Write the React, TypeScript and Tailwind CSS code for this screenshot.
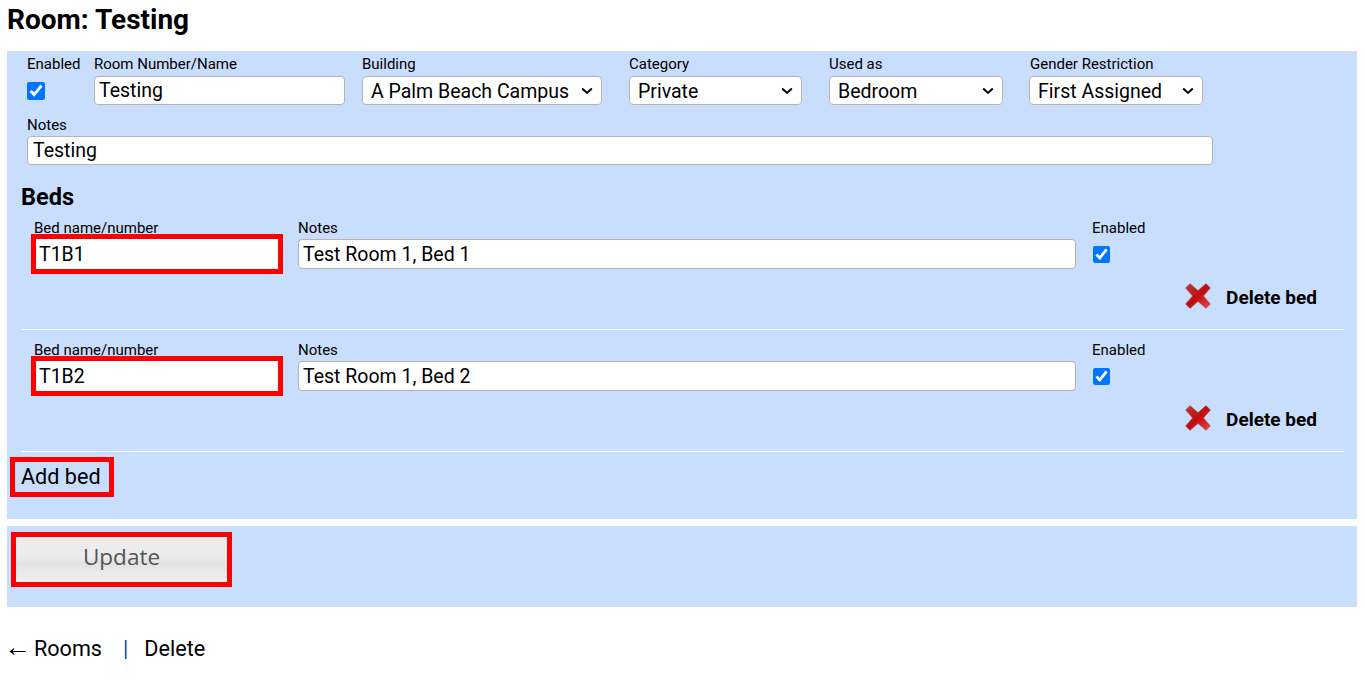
import React from "react";

const inputCls =
  "block rounded-[4px] border border-[#b5b5b5] bg-white px-[4px] text-[19.5px] text-black outline-none";

function Field({ label, className, children }: { label: string; className: string; children: React.ReactNode }) {
  return (
    <div className={className}>
      <div className="h-[18px] text-[15px] leading-[17px] whitespace-nowrap text-black">{label}</div>
      {children}
    </div>
  );
}

function Dropdown({ value, width }: { value: string; width: string }) {
  return (
    <div className={`relative mt-[2px] ${width}`}>
      <select
        className="block h-[29px] w-full appearance-none rounded-[4px] border border-[#b5b5b5] bg-white pb-[1px] pl-[8px] text-[19.5px] text-black outline-none"
        defaultValue={value}
      >
        <option value={value}>{value}</option>
      </select>
      {/* native arrow is too small here, so it is drawn */}
      <svg width="12" height="8" viewBox="0 0 12 8" className="pointer-events-none absolute top-[11px] right-[9px]">
        <path d="M1.2 1.5 L6 6 L10.8 1.5" fill="none" stroke="#000" strokeWidth="2" />
      </svg>
    </div>
  );
}

function DeleteIcon() {
  return (
    <svg width="28" height="28" viewBox="0 0 28 28" className="block blur-[0.4px]">
      <defs>
        <linearGradient id="delRed" x1="0" y1="0" x2="1" y2="1">
          <stop offset="0" stopColor="#b5403f" />
          <stop offset="0.5" stopColor="#c20c0c" />
          <stop offset="1" stopColor="#ee4a4a" />
        </linearGradient>
      </defs>
      <path
        d="M6 1.5 L14 8.5 L22 1.5 L26.5 6 L19.5 14 L26.5 22 L22 26.5 L14 19.5 L6 26.5 L1.5 22 L8.5 14 L1.5 6 Z"
        fill="url(#delRed)"
        stroke="#8a5060"
        strokeOpacity="0.35"
        strokeWidth="1"
        strokeLinejoin="round"
      />
    </svg>
  );
}

function BedRow({ name, notes }: { name: string; notes: string }) {
  return (
    <div className="mr-[13px] h-[122px] border-b border-white">
      <div className="flex pt-[13px]">
        <div className="ml-[10px] w-[267px]">
          <div className="ml-[3px] h-[13px] text-[15px] leading-[14px] whitespace-nowrap text-black">Bed name/number</div>
          <input
            readOnly
            value={name}
            className="block h-[40px] w-[252px] border-[5px] border-[#ff0000] bg-white px-[3px] text-[19.5px] text-black outline-none"
          />
        </div>
        <div className="w-[794px]">
          <div className="h-[18px] text-[15px] leading-[14px] text-black">Notes</div>
          <input readOnly value={notes} className={`${inputCls} h-[30px] w-[778px]`} />
        </div>
        <div>
          <div className="h-[18px] text-[15px] leading-[14px] text-black">Enabled</div>
          <input type="checkbox" readOnly checked className="mt-[7px] ml-[1px] block h-[17px] w-[17px]" />
        </div>
      </div>
      <div className="mt-[5px] flex items-center justify-end pr-[27px]">
        <DeleteIcon />
        <span className="mt-[5px] ml-[14px] text-[19px] font-bold text-black">Delete bed</span>
      </div>
    </div>
  );
}

export default function App() {
  return (
    <div className="h-[690px] w-[1365px] overflow-hidden bg-white font-['Roboto',sans-serif] text-black">
      <h1 className="ml-[7px] h-[51px] pt-[3px] text-[28px] leading-[34px] font-bold">Room: Testing</h1>

      <div className="mx-[7px] h-[468px] w-[1350px] bg-[#c9ddfc]">
        <div className="flex pt-[5px] pl-[20px]">
          <Field label="Enabled" className="w-[67px]">
            <input type="checkbox" readOnly checked className="mt-[8px] block h-[18px] w-[18px]" />
          </Field>
          <Field label="Room Number/Name" className="w-[268px]">
            <input readOnly value="Testing" className={`${inputCls} mt-[2px] h-[29px] w-[251px] pt-[1px]`} />
          </Field>
          <Field label="Building" className="w-[267px]">
            <Dropdown value="A Palm Beach Campus" width="w-[240px]" />
          </Field>
          <Field label="Category" className="w-[200px]">
            <Dropdown value="Private" width="w-[173px]" />
          </Field>
          <Field label="Used as" className="w-[200px]">
            <Dropdown value="Bedroom" width="w-[174px]" />
          </Field>
          <Field label="Gender Restriction" className="w-[174px] [&>div:first-child]:ml-[1px]">
            <Dropdown value="First Assigned" width="w-[174px]" />
          </Field>
        </div>

        <div className="mt-[11px] ml-[20px]">
          <div className="h-[20px] text-[15px] leading-[19px]">Notes</div>
          <input readOnly value="Testing" className={`${inputCls} h-[29px] w-[1186px] px-[5px] pt-[1px]`} />
        </div>

        <h2 className="mt-[17px] ml-[14px] h-[30px] text-[23.5px] leading-[30px] font-bold">Beds</h2>

        <div className="-mt-[4px] ml-[14px]">
          <BedRow name="T1B1" notes="Test Room 1, Bed 1" />
          <BedRow name="T1B2" notes="Test Room 1, Bed 2" />
        </div>

        <button className="mt-[5px] ml-[3px] block h-[40px] w-[104px] border-[5px] border-[#ff0000] pl-[6px] text-left text-[21.6px] leading-none text-black">
          Add bed
        </button>
      </div>

      <div className="mx-[7px] mt-[7px] h-[81px] w-[1350px] bg-[#c9ddfc] pt-[6px] pl-[4px]">
        <button className="h-[55px] w-[221px] border-[5px] border-[#ff0000] bg-[linear-gradient(#ededed_0%,#ebebeb_45%,#e2e2e2_58%,#f0f0f0_100%)] pb-[5px] font-['Open_Sans',sans-serif] text-[22.5px] leading-none text-[#555]">
          Update
        </button>
      </div>

      <div className="mt-[28px] ml-[7px] flex h-[28px] items-center text-[21.6px] leading-[28px] text-black">
        <span className="-ml-[3px] mb-[4px] font-['Liberation_Sans',sans-serif] text-[27px]">←</span>
        <span className="ml-[3px]">Rooms</span>
        <span className="ml-[21px] text-[#0b4f9c]">|</span>
        <span className="ml-[16px]">Delete</span>
      </div>
    </div>
  );
}
